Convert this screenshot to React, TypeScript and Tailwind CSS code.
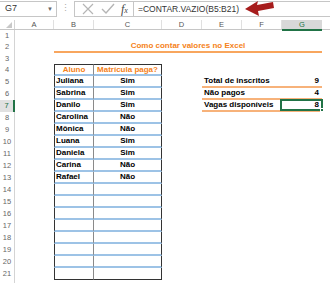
import React from 'react';

const COLS = [
  { id: 'A', w: 'w-[39px]' },
  { id: 'B', w: 'w-[40px]' },
  { id: 'C', w: 'w-[68px]' },
  { id: 'D', w: 'w-[40px]' },
  { id: 'E', w: 'w-[40px]' },
  { id: 'F', w: 'w-[40px]' },
  { id: 'G', w: 'w-[40px]' },
];

const alunos = [
  ['Juliana', 'Sim'],
  ['Sabrina', 'Sim'],
  ['Danilo', 'Sim'],
  ['Carolina', 'Não'],
  ['Mônica', 'Não'],
  ['Luana', 'Sim'],
  ['Daniela', 'Sim'],
  ['Carina', 'Não'],
  ['Rafael', 'Não'],
];

const resumo: Record<number, [string, string]> = {
  5: ['Total de inscritos', '9'],
  6: ['Não pagos', '4'],
  7: ['Vagas disponíveis', '8'],
};

const RowHeader = ({ n, active }: { n?: number; active?: boolean }) => (
  <div
    className={
      active
        ? 'w-[15px] shrink-0 h-full flex items-center justify-center bg-[#e1e1e1] text-[#217346] border-r-2 border-[#217346] text-[7.5px]'
        : 'w-[15px] shrink-0 h-full flex items-center justify-center text-[#666] border-r border-[#d4d4d4] text-[7.5px]'
    }
  >
    {n}
  </div>
);

const FormulaBar = () => (
  <div className="flex h-[18px] items-start pt-px text-[8.5px] text-[#333]">
    <div className="w-[57px] h-[16px] border border-l-0 border-[#c6c6c6] flex items-center justify-between pl-[5px] pr-[3px]">
      <span className="text-[9px]">G7</span>
      <span className="text-[6px] text-[#666]">▼</span>
    </div>
    <div className="w-[17px] h-[16px] flex items-center justify-center text-[#aaa] text-[9px]">⋮</div>
    <div className="w-[60px] h-[16px] border border-[#c6c6c6] flex items-center">
      <svg width="20" height="14" viewBox="0 0 20 14" className="ml-[3px]">
        <path d="M5 2 L15 12 M15 2 L5 12" stroke="#b5b5b5" strokeWidth="1.2" />
      </svg>
      <svg width="20" height="14" viewBox="0 0 20 14">
        <path d="M4 7 L8 11 L16 2" stroke="#b5b5b5" strokeWidth="1.4" fill="none" />
      </svg>
      <span className="ml-[3px] font-['Liberation_Serif',serif] italic text-[12px] text-[#444] leading-none">
        f<span className="text-[8px]">x</span>
      </span>
    </div>
    <div className="flex-1 h-[16px] border border-l-0 border-r-0 border-[#c6c6c6] flex items-center pl-[4px]">
      =CONTAR.VAZIO(B5:B21)
    </div>
  </div>
);

const ColumnHeaders = () => (
  <div className="flex h-[10px] border-b border-[#c6c6c6] text-[7.5px] text-[#555]">
    <div className="w-[15px] shrink-0 h-full relative border-r border-[#d4d4d4]">
      <div className="absolute right-[2px] bottom-[1px] w-0 h-0 border-l-[6px] border-l-transparent border-b-[6px] border-b-[#c8c8c8]" />
    </div>
    {COLS.map((c) =>
      c.id === 'G' ? (
        <div
          key={c.id}
          className={`${c.w} shrink-0 h-[11px] flex items-center justify-center bg-[#d8d8d8] text-[#217346] border-b-2 border-[#217346]`}
        >
          {c.id}
        </div>
      ) : (
        <div key={c.id} className={`${c.w} shrink-0 h-full flex items-center justify-center border-r border-[#e0e0e0]`}>
          {c.id}
        </div>
      )
    )}
    <div className="flex-1" />
  </div>
);

const Row = ({ n, h, active, children }: { n?: number; h: string; active?: boolean; children?: React.ReactNode }) => (
  <div className={`flex ${h}`}>
    <RowHeader n={n} active={active} />
    <div className="w-[39px] shrink-0" />
    {children}
  </div>
);

export default function App() {
  const dataRows = Array.from({ length: 17 }, (_, i) => i + 5);

  return (
    <div className="w-[330px] h-[283px] overflow-hidden bg-white relative font-['Liberation_Sans',Arial,sans-serif]">
      <FormulaBar />
      <div className="h-[2px]" />
      <ColumnHeaders />

      <Row n={1} h="h-[11px]" />
      <Row n={2} h="h-[12px]">
        <div className="w-[268px] shrink-0 h-full border-b-2 border-[#f8a65e] flex items-center justify-center text-[8px] font-bold text-[#f58220]">
          Como contar valores no Excel
        </div>
      </Row>
      <Row n={3} h="h-[11px]" />
      <Row n={4} h="h-[12px]">
        <div className="w-[40px] shrink-0 h-full border-t border-l border-r border-b-2 border-t-[#333] border-l-[#333] border-r-[#8a8a8a] border-b-[#9dc3e6] flex items-center justify-center text-[8px] font-bold text-[#f58220]">
          Aluno
        </div>
        <div className="w-[68px] shrink-0 h-full border-t border-r border-b-2 border-t-[#333] border-r-[#333] border-b-[#9dc3e6] flex items-center justify-center text-[8px] font-bold text-[#f58220]">
          Matrícula paga?
        </div>
      </Row>

      {dataRows.map((n) => {
        const aluno = alunos[n - 5];
        const last = n === 21;
        const bottom = last ? 'border-b border-b-[#333]' : 'border-b-2 border-b-[#9dc3e6]';
        const extra = resumo[n];
        return (
          <Row key={n} n={n} h="h-[12px]" active={n === 7}>
            <div
              className={`w-[40px] shrink-0 h-full border-l border-r border-l-[#333] border-r-[#8a8a8a] ${bottom} flex items-center pl-[1px] text-[8px] font-bold text-black`}
            >
              {aluno ? aluno[0] : ''}
            </div>
            <div
              className={`w-[68px] shrink-0 h-full border-r border-r-[#333] ${bottom} flex items-center justify-center text-[8px] font-bold text-black`}
            >
              {aluno ? aluno[1] : ''}
            </div>
            <div className="w-[40px] shrink-0" />
            {extra && (
              <>
                <div className="w-[80px] shrink-0 h-full border-b-2 border-[#f7b27a] flex items-center pl-[2px] text-[8px] font-bold text-black">
                  {extra[0]}
                </div>
                <div className="w-[40px] shrink-0 h-full border-b-2 border-[#f7b27a] flex items-center justify-end pr-[3px] text-[8px] font-bold text-black relative">
                  {extra[1]}
                  {n === 7 && (
                    <div className="absolute -left-[2px] -top-px -right-px -bottom-[1px] border-2 border-[#217346]">
                      <div className="absolute -right-[3px] -bottom-[3px] w-[4px] h-[4px] bg-[#217346] border border-white" />
                    </div>
                  )}
                </div>
              </>
            )}
          </Row>
        );
      })}
      <Row h="h-[12px]" />

      <svg className="absolute left-[243px] top-0" width="34" height="18" viewBox="243 0 34 18">
        <polygon points="245,9 258,1 257,5 273,2 274,8 258,11 259,16" fill="#a61c1c" />
      </svg>
    </div>
  );
}
